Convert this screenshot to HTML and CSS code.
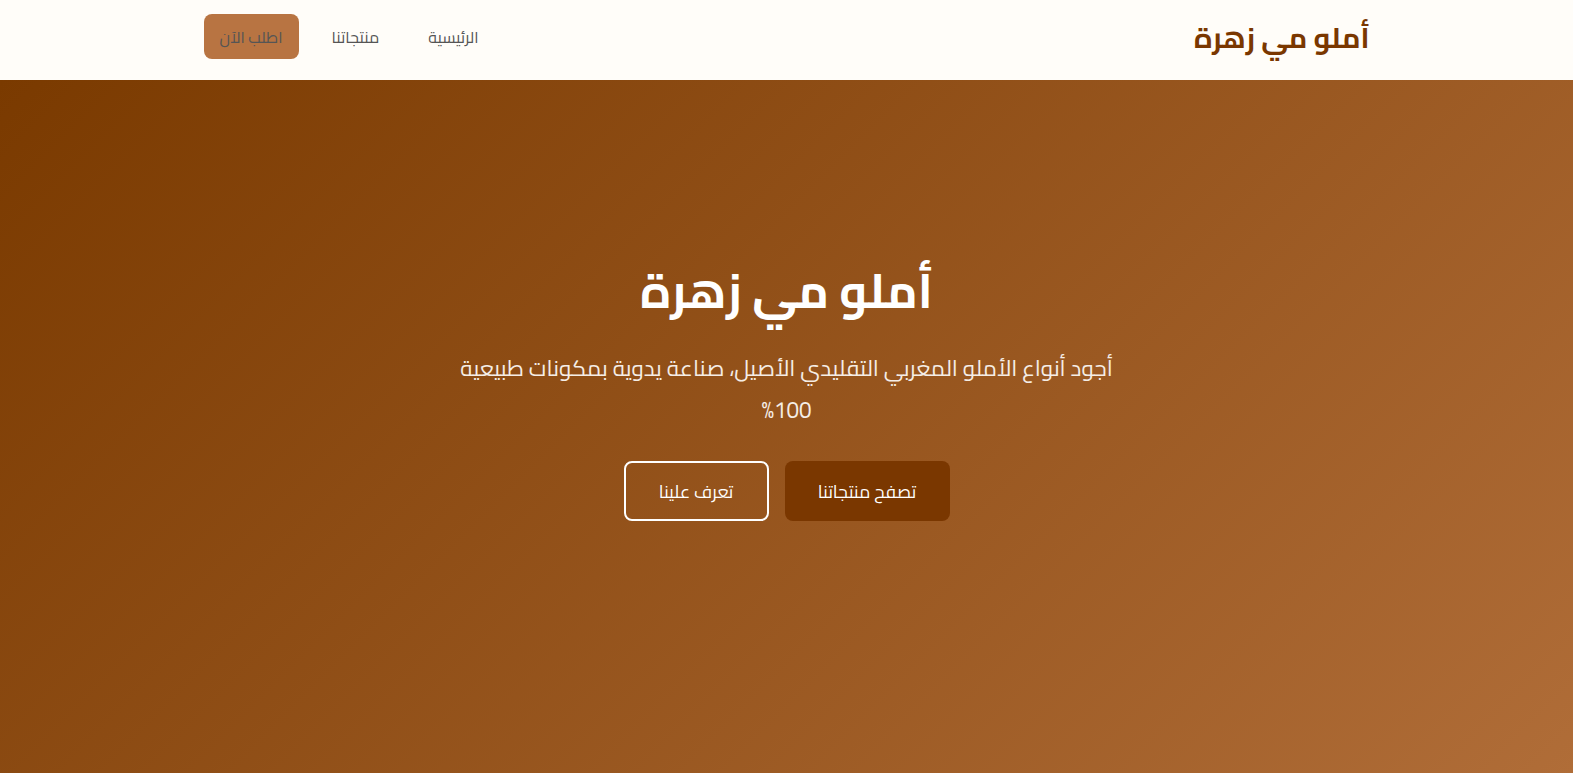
FILE: index.html
```html
<!DOCTYPE html>
<html lang="ar" dir="rtl">
<head>
<meta charset="utf-8">
<title>أملو مي زهرة</title>
<link rel="stylesheet" href="styles.css">
</head>
<body>
<header class="site-header">
  <div class="container header-inner">
    <a class="logo" href="#">أملو مي زهرة</a>
    <nav class="nav">
      <a class="nav-link" href="#">الرئيسية</a>
      <a class="nav-link" href="#">منتجاتنا</a>
      <a class="nav-cta" href="#">اطلب الآن</a>
    </nav>
  </div>
</header>
<section class="hero">
  <div class="hero-content">
    <h1 class="hero-title">أملو مي زهرة</h1>
    <p class="hero-text">أجود أنواع الأملو المغربي التقليدي الأصيل، صناعة يدوية بمكونات طبيعية 100%</p>
    <div class="hero-actions">
      <a class="btn btn-primary" href="#">تصفح منتجاتنا</a>
      <a class="btn btn-outline" href="#">تعرف علينا</a>
    </div>
  </div>
</section>
</body>
</html>
```
FILE: styles.css
```css
* { box-sizing: border-box; }
html, body { margin: 0; padding: 0; }
body {
  font-family: "Cairo", "Changa", "Noto Kufi Arabic", "Noto Sans Arabic", "DejaVu Sans", sans-serif;
  background: #fffdf9;
  overflow: hidden;
}
a { text-decoration: none; }
.site-header {
  background: #fffdf9;
  height: 80px;
}
.container {
  width: 1166px;
  margin: 0 auto;
}
.header-inner {
  height: 80px;
  padding: 14px 0 21px;
  display: flex;
  align-items: center;
  justify-content: space-between;
}
.logo {
  color: #7a3700;
  font-size: 28.8px;
  font-weight: 700;
}
.nav {
  display: flex;
  align-items: center;
  gap: 17px;
}
.nav-link {
  color: #555;
  font-size: 16px;
  padding: 0 16px;
}
.nav-cta {
  background: #b87442;
  color: #555;
  font-size: 16px;
  border-radius: 8px;
  width: 95px;
  height: 45px;
  display: flex;
  align-items: center;
  justify-content: center;
}
.hero {
  height: 693px;
  background: linear-gradient(135deg, #7a3a00 0%, #b06d38 100%);
  display: flex;
  justify-content: center;
  padding-top: 179px;
}
.hero-content {
  width: 690px;
  text-align: center;
  color: #fff;
}
.hero-title {
  margin: 0 0 26px;
  font-size: 48px;
  font-weight: 700;
  line-height: 62px;
}
.hero-text {
  margin: 0 0 30px;
  font-size: 22.4px;
  line-height: 42px;
  color: #f5ede6;
}
.hero-actions {
  display: flex;
  justify-content: center;
  gap: 16px;
}
.btn {
  height: 60px;
  border-radius: 8px;
  display: flex;
  align-items: center;
  justify-content: center;
  font-size: 17.6px;
  color: #fff;
}
.btn-primary {
  background: #7a3700;
  width: 165px;
}
.btn-outline {
  border: 2px solid #fff;
  width: 145px;
}
```
